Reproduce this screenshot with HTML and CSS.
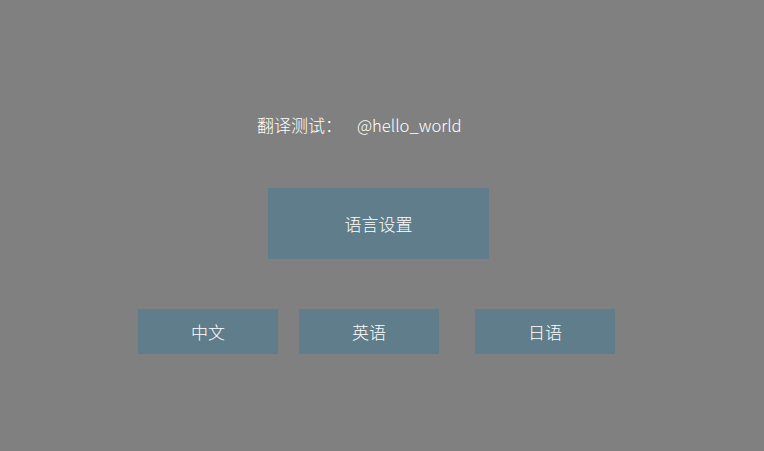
FILE: index.html
```html
<!DOCTYPE html>
<html lang="zh">
<head>
<meta charset="utf-8">
<link rel="stylesheet" href="styles.css">
</head>
<body>
<div class="page">
  <div class="title-row">
    <span class="label">翻译测试：</span>
    <span class="value">@hello_world</span>
  </div>
  <div class="main-btn">语言设置</div>
  <div class="lang-row">
    <div class="btn">中文</div>
    <div class="btn second">英语</div>
    <div class="btn third">日语</div>
  </div>
</div>
</body>
</html>
```
FILE: styles.css
```css
html, body {
  margin: 0;
  padding: 0;
  background: #808080;
}
.page {
  width: 764px;
  height: 451px;
  display: flex;
  flex-direction: column;
  align-items: flex-start;
  font-family: "Noto Sans CJK SC", "Noto Sans", sans-serif;
  font-size: 17px;
  font-weight: 300;
  color: #ffffff;
  padding-top: 114px;
  box-sizing: border-box;
}
.title-row {
  display: flex;
  margin-left: 257px;
  line-height: 22px;
  height: 22px;
}
.label {
  width: 100px;
}
.value {
  font-size: 16.6px;
}
.main-btn {
  margin-top: 52px;
  margin-left: 268px;
  width: 221px;
  height: 71px;
  background: #607d8b;
  display: flex;
  align-items: center;
  justify-content: center;
}
.lang-row {
  margin-top: 50px;
  margin-left: 138px;
  display: flex;
}
.btn {
  width: 140px;
  height: 45px;
  background: #607d8b;
  display: flex;
  align-items: center;
  justify-content: center;
}
.second { margin-left: 21px; }
.third { margin-left: 36px; }
```
